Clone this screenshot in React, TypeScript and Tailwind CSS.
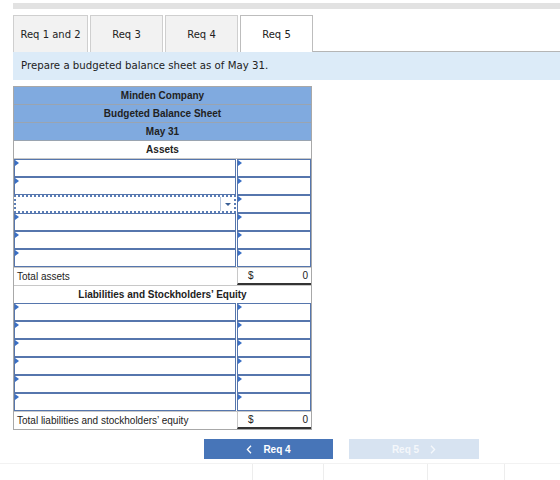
import React from 'react';

const tabs = [
  { label: 'Req 1 and 2', w: 'w-[75px]' },
  { label: 'Req 3', w: 'w-[73px]' },
  { label: 'Req 4', w: 'w-[73px]' },
];

// small blue flag in the corner of an input cell
function Flag() {
  return (
    <span className="absolute top-0 left-0 w-0 h-0 border-y-[3px] border-y-transparent border-l-[4px] border-l-[#3a6fc4]" />
  );
}

function InputRow({ dropdown = false }: { dropdown?: boolean }) {
  return (
    <div className="flex h-[18px] gap-px">
      {dropdown ? (
        <div className="relative w-[222px] h-full border-2 border-dotted border-[#5b7db5] flex justify-end">
          <div className="w-[14px] h-full border-l border-[#b7c6dd] flex items-center justify-center">
            <span className="w-0 h-0 border-x-[3px] border-x-transparent border-t-[3px] border-t-[#3a5f95]" />
          </div>
        </div>
      ) : (
        <div className="relative w-[222px] h-full border border-[#5676ad]">
          <Flag />
        </div>
      )}
      <div className="relative flex-1 h-full border border-[#5676ad]">
        <Flag />
      </div>
    </div>
  );
}

function TotalRow({ label }: { label: string }) {
  return (
    <div className="flex h-[18px] text-[10px] text-[#222]">
      <div className="w-[223px] h-full border-t border-[#c8c8c8] flex items-center pl-[3px]">{label}</div>
      <div className="flex-1 h-full border-l border-t border-[#c8c8c8] border-b-2 border-b-[#333] flex items-center justify-between pl-[10px] pr-[3px]">
        <span>$</span>
        <span>0</span>
      </div>
    </div>
  );
}

function Chevron({ dir }: { dir: 'left' | 'right' }) {
  return (
    <svg width="6" height="9" viewBox="0 0 6 9" fill="none" stroke="currentColor" strokeWidth="1.3">
      {dir === 'left' ? <path d="M5 0.8 1.4 4.5 5 8.2" /> : <path d="M1 0.8 4.6 4.5 1 8.2" />}
    </svg>
  );
}

export default function App() {
  const headRow = 'h-[18px] flex items-center justify-center border-b border-[#9aa4b0] font-bold';

  return (
    <div className="w-[560px] h-[480px] bg-white overflow-hidden flex flex-col" style={{ fontFamily: '"DejaVu Sans", Verdana, sans-serif' }}>
      <div className="ml-[13px] mt-[3px] h-[6px] bg-[#e2e2e2]" />

      {/* tabs */}
      <div className="ml-[13px] mt-[6px] flex items-end h-[37px] text-[10px] text-[#222]">
        {tabs.map((t) => (
          <div key={t.label} className={`${t.w} h-full mr-[2px] bg-[#f2f2f2] border border-b-0 border-[#cfcfcf] flex items-center justify-center`}>
            {t.label}
          </div>
        ))}
        <div className="w-[73px] h-full bg-white border border-b-0 border-[#bdbdbd] flex items-center justify-center">Req 5</div>
        <div className="flex-1 border-b border-[#b5b5b5]" />
      </div>

      {/* instruction */}
      <div className="ml-[13px] h-[28px] bg-[#dcebf8] flex items-center pl-[8px] text-[10.2px] text-[#222]">
        Prepare a budgeted balance sheet as of May 31.
      </div>

      {/* balance sheet */}
      <div className="ml-[13px] mt-[6px] w-[299px] border border-[#a8a8a8] flex flex-col text-[10px] text-[#222]" style={{ fontFamily: '"Liberation Sans", Arial, sans-serif' }}>
        <div className={`${headRow} bg-[#80aadf]`}>Minden Company</div>
        <div className={`${headRow} bg-[#80aadf]`}>Budgeted Balance Sheet</div>
        <div className={`${headRow} bg-[#80aadf]`}>May 31</div>
        <div className="h-[18px] flex items-center justify-center font-bold border-b border-[#c8c8c8]">Assets</div>
        <InputRow />
        <InputRow />
        <InputRow dropdown />
        <InputRow />
        <InputRow />
        <InputRow />
        <TotalRow label="Total assets" />
        <div className="h-[18px] flex items-center justify-center font-bold border-t border-[#c8c8c8]">
          Liabilities and Stockholders’ Equity
        </div>
        <InputRow />
        <InputRow />
        <InputRow />
        <InputRow />
        <InputRow />
        <InputRow />
        <TotalRow label="Total liabilities and stockholders’ equity" />
      </div>

      {/* nav buttons */}
      <div className="mt-[9px] flex h-[20px] text-[10px] font-bold text-white" style={{ fontFamily: '"Liberation Sans", Arial, sans-serif' }}>
        <div className="ml-[204px] w-[129px] h-full bg-[#4775b8] flex items-center justify-center gap-[11px]">
          <Chevron dir="left" />
          <span>Req 4</span>
        </div>
        <div className="ml-[16px] w-[130px] h-full bg-[#d7e3f1] flex items-center justify-center gap-[11px] text-[#f4f7fb]">
          <span>Req 5</span>
          <Chevron dir="right" />
        </div>
      </div>

      {/* footer strip */}
      <div className="mt-[4px] flex-1 border-t border-[#f2f2f2] flex">
        <div className="w-[253px] border-r border-[#ededed]" />
        <div className="w-[71px] border-r border-[#ededed]" />
        <div className="w-[104px] border-r border-[#ededed]" />
        <div className="w-[77px] border-r border-[#ededed]" />
      </div>
    </div>
  );
}
